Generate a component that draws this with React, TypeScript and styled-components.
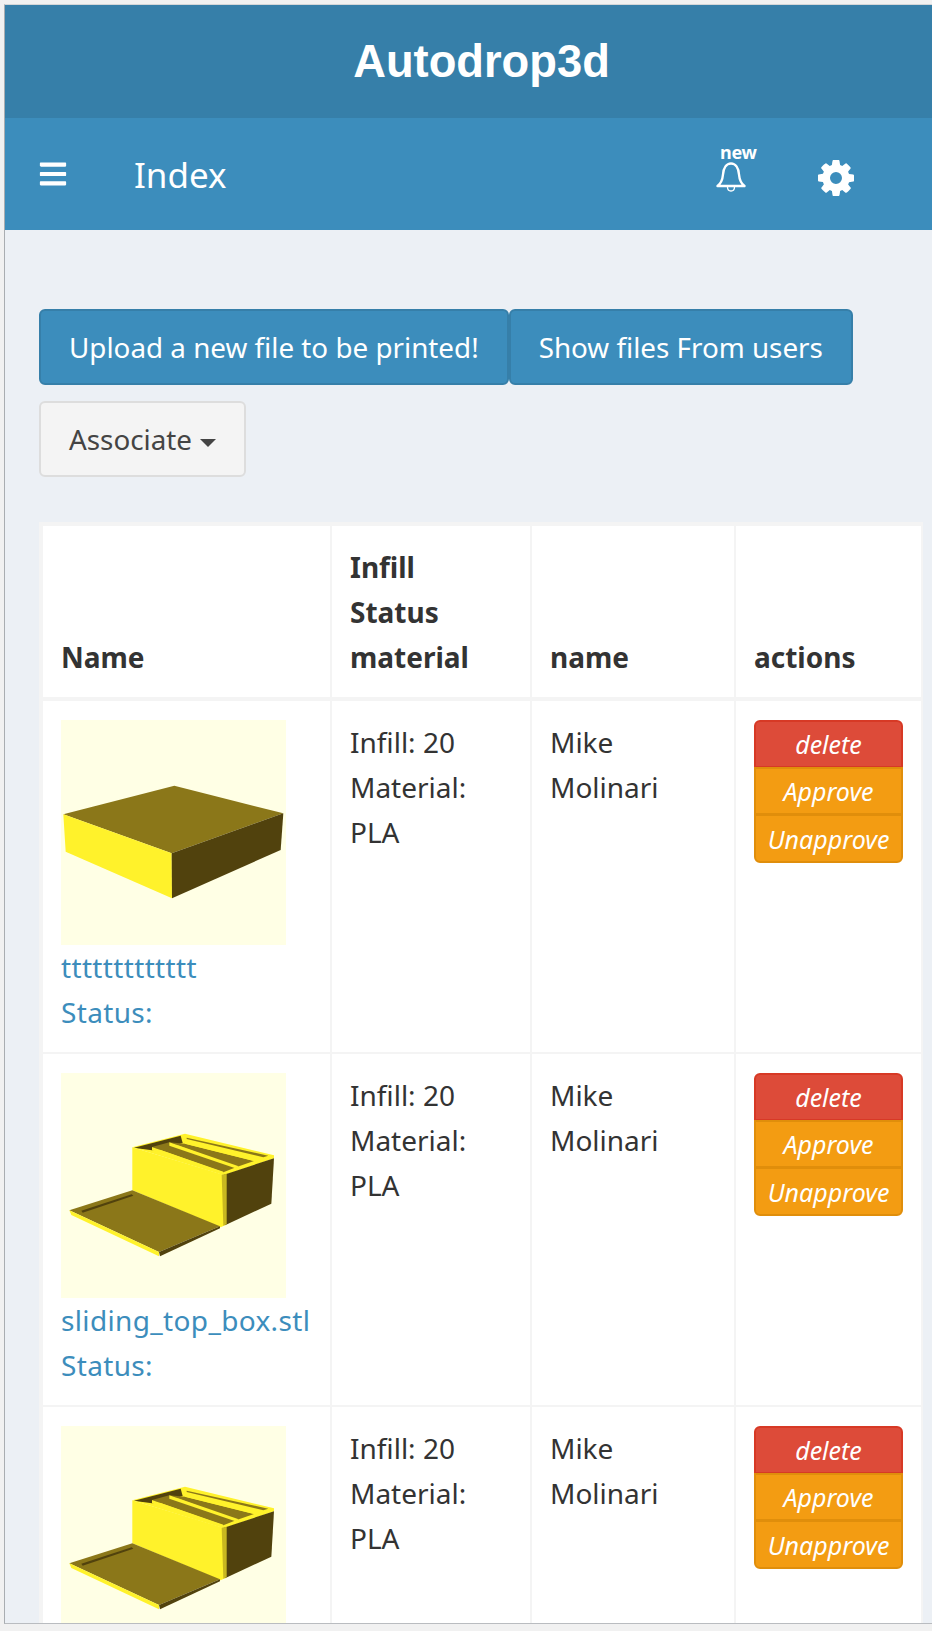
import React from "react";
import styled, { createGlobalStyle } from "styled-components";
import { FaBars } from "react-icons/fa";

const BODY_FONT = `"Noto Sans", "Open Sans", sans-serif`;

const GlobalStyle = createGlobalStyle`
  html, body {
    margin: 0;
    padding: 0;
    background: #f1f1f1;
  }
`;

const Frame = styled.div`
  box-sizing: border-box;
  width: 932px;
  height: 1620px;
  margin-top: 4px;
  padding-left: 4px;
  overflow: hidden;
`;

const Window = styled.div`
  box-sizing: border-box;
  height: 100%;
  background: #ecf0f5;
  border-left: 1px solid #a9adb1;
  border-top: 1px solid #d4d6d8;
  border-bottom: 1px solid #b9bcc0;
  font-family: ${BODY_FONT};
  font-size: 28px;
  line-height: 45px;
  color: #333;
  overflow: hidden;
`;

const Header = styled.header`
  height: 113px;
  background: #367fa9;
  color: #fff;
  display: flex;
  align-items: center;
  justify-content: center;
  padding-left: 26px;
  font-family: "Liberation Sans", Arial, sans-serif;
  font-weight: 700;
  font-size: 45.3px;
`;

const NavBar = styled.nav`
  height: 112px;
  background: #3c8dbc;
  color: #fff;
  display: flex;
  align-items: center;
  padding-left: 33px;
`;

const NavTitle = styled.span`
  margin-left: 66px;
  font-size: 35px;
  flex: 1;
`;

const BellWrap = styled.div`
  position: relative;
  width: 30px;
  height: 30px;
  margin-right: 72px;
`;

const BellBadge = styled.span`
  position: absolute;
  left: 4px;
  top: -17px;
  font-size: 18px;
  font-weight: 700;
  line-height: 20px;
  letter-spacing: -0.3px;
`;

const GearSlot = styled.div`
  display: flex;
  margin: 8px 78px 0 0;
`;

const Content = styled.main`
  padding: 79px 0 0 34px;
`;

const ButtonRow = styled.div`
  display: flex;
  flex-wrap: wrap;
  row-gap: 16px;
  width: 880px;
  margin-bottom: 45px;
`;

const Button = styled.button<{ $variant?: "primary" | "plain" }>`
  box-sizing: border-box;
  height: 76px;
  padding: 0 28px;
  border-radius: 6px;
  font-family: inherit;
  font-size: 27.8px;
  white-space: nowrap;
  border: 2px solid ${({ $variant }) => ($variant === "plain" ? "#ddd" : "#367fa9")};
  background: ${({ $variant }) => ($variant === "plain" ? "#f4f4f4" : "#3c8dbc")};
  color: ${({ $variant }) => ($variant === "plain" ? "#444" : "#fff")};
`;

const Caret = styled.span`
  display: inline-block;
  margin-left: 8px;
  vertical-align: middle;
  border-top: 8px solid #444;
  border-left: 8px solid transparent;
  border-right: 8px solid transparent;
`;

const Table = styled.table`
  width: 884px;
  table-layout: fixed;
  border-collapse: separate;
  border-spacing: 0;
  background: #fff;
  border-style: solid;
  border-color: #f4f4f4;
  border-width: 4px 2px 0 4px;
`;

const HeadCell = styled.th`
  padding: 19px 19px 17px 18px;
  vertical-align: bottom;
  text-align: left;
  font-weight: 700;
  border-right: 2px solid #f4f4f4;
  border-bottom: 4px solid #f4f4f4;
  &:last-child {
    border-right: 0;
  }
`;

const Cell = styled.td`
  padding: 19px 19px 17px 18px;
  vertical-align: top;
  border-right: 2px solid #f4f4f4;
  border-bottom: 2px solid #f4f4f4;
  &:last-child {
    border-right: 0;
    padding-right: 18px;
  }
`;

const Thumb = styled.svg`
  display: block;
  width: 225px;
  height: 225px;
`;

const FileLink = styled.a`
  display: block;
  color: #3c8dbc;
  white-space: nowrap;
  letter-spacing: 0.35px;
`;

const ActionGroup = styled.div`
  display: flex;
  flex-direction: column;
  width: 149px;
`;

const ActionButton = styled.button<{ $tone: "danger" | "warning" }>`
  box-sizing: border-box;
  height: 48px;
  padding: 0;
  font-family: inherit;
  font-size: 25px;
  font-style: italic;
  color: #fff;
  background: ${({ $tone }) => ($tone === "danger" ? "#dd4b39" : "#f39c12")};
  border: 2px solid ${({ $tone }) => ($tone === "danger" ? "#d73925" : "#e08e0b")};
  margin-top: -1px;
  &:first-child {
    margin-top: 0;
    border-radius: 6px 6px 0 0;
  }
  &:last-child {
    height: 49px;
    border-radius: 0 0 6px 6px;
  }
`;

const BellIcon = () => (
  <svg width="30" height="30" viewBox="0 0 30 30" fill="none" stroke="#fff" strokeWidth="2.4" strokeLinejoin="round">
    <path d="M1.5 24c3.5-2.500 5-6 5.500-11.500C7.500 6 10.500 1.500 15 1.500S22.500 6 23 12.500C23.500 18 25 21.500 28.500 24z" />
    <path d="M11.500 25c0 2.500 1.500 4 3.500 4s3.500-1.500 3.500-4" strokeWidth="1.300" />
  </svg>
);

const GearIcon = () => (
  <svg width="36" height="36" viewBox="128 128 1536 1536" fill="#fff" fillRule="evenodd">
    <path d="M1152 896q0-106-75-181t-181-75-181 75-75 181 75 181 181 75 181-75 75-181zm512-109v222q0 12-8 23t-20 13l-185 28q-19 54-39 91 35 50 107 138 10 12 10 25t-9 23q-27 37-99 108t-94 71q-12 0-26-9l-138-108q-44 23-91 38-16 136-29 186-7 28-36 28h-222q-14 0-24.500-8.500t-11.500-21.500l-28-184q-49-16-90-37l-141 107q-10 9-25 9-14 0-25-11-126-114-165-168-7-10-7-23 0-12 8-23 15-21 51-66.500t54-70.500q-27-50-41-99l-183-27q-13-2-21-12.500t-8-23.500v-222q0-12 8-23t19-13l186-28q14-46 39-92-40-57-107-138-10-12-10-24 0-10 9-23 26-36 98.500-107.500t94.500-71.500q13 0 26 10l138 107q44-23 91-38 16-136 29-186 7-28 36-28h222q14 0 24.500 8.500t11.500 21.500l28 184q49 16 90 37l142-107q9-9 24-9 13 0 25 10 129 119 165 170 7 8 7 22 0 12-8 23-15 21-51 66.500t-54 70.500q26 50 41 98l183 28q13 2 21 12.500t8 23.500z" />
  </svg>
);

const FlatBoxThumb = () => (
  <Thumb viewBox="63 60 675 675">
    <rect x="63" y="60" width="675" height="675" fill="#ffffe5" />
    <polygon points="70,343 403,257 730,340 395,460" fill="#8b7719" />
    <polygon points="70,343 395,460 396,595 77,455" fill="#fff22b" />
    <polygon points="395,460 730,340 722,450 396,595" fill="#51420d" />
  </Thumb>
);

const SlidingBoxThumb = () => (
  <Thumb viewBox="33 40 675 675">
    <rect x="33" y="40" width="675" height="675" fill="#ffffe5" />
    {/* tray, top and inner dividers */}
    <polygon points="247,263 405,222 672,287 672,296 522,347" fill="#fff22b" />
    <polygon points="252,264 392,228 398,250 330,270 306,272 262,266" fill="#51420d" />
    <polygon points="306,262 358,248 560,322 520,338" fill="#8b7719" />
    <polygon points="306,262 520,336 516,342 306,272" fill="#fff22b" />
    <polygon points="358,248 405,252 612,304 560,322" fill="#8b7719" />
    <polygon points="358,248 566,320 556,326 358,258" fill="#fff22b" />
    <polygon points="405,236 640,292 612,304 405,252" fill="#fff22b" />
    <polygon points="410,234 655,288 640,293 410,238" fill="#8b7719" />
    {/* front and side walls */}
    <polygon points="247,263 520,345 525,497 512,503 247,392" fill="#fff22b" />
    <polygon points="522,345 672,296 664,432 525,497" fill="#51420d" />
    <polygon points="515,345 530,342 530,494 520,498" fill="#c9b820" />
    {/* sliding lid */}
    <polygon points="58,452 247,392 510,500 327,577" fill="#8b7719" />
    <polygon points="58,452 327,577 327,590 64,466" fill="#fff22b" />
    <polygon points="327,577 510,500 510,506 330,590" fill="#51420d" />
    <polygon points="94,453 245,404 250,408 98,459" fill="#51420d" />
  </Thumb>
);

const rows = [
  { file: "ttttttttttttt", Preview: FlatBoxThumb },
  { file: "sliding_top_box.stl", Preview: SlidingBoxThumb },
  { file: "sliding_top_box.stl", Preview: SlidingBoxThumb },
];

export default function App() {
  return (
    <>
      <GlobalStyle />
      <Frame>
        <Window>
          <Header>Autodrop3d</Header>
          <NavBar>
            <FaBars size={30} />
            <NavTitle>Index</NavTitle>
            <BellWrap>
              <BellIcon />
              <BellBadge>new</BellBadge>
            </BellWrap>
            <GearSlot>
              <GearIcon />
            </GearSlot>
          </NavBar>
          <Content>
            <ButtonRow>
              <Button>Upload a new file to be printed!</Button>
              <Button>Show files From users</Button>
              <Button $variant="plain">
                Associate
                <Caret />
              </Button>
            </ButtonRow>
            <Table>
              <colgroup>
                <col style={{ width: 289 }} />
                <col style={{ width: 200 }} />
                <col style={{ width: 204 }} />
                <col />
              </colgroup>
              <thead>
                <tr>
                  <HeadCell>Name</HeadCell>
                  <HeadCell>
                    Infill
                    <br />
                    Status
                    <br />
                    material
                  </HeadCell>
                  <HeadCell>name</HeadCell>
                  <HeadCell>actions</HeadCell>
                </tr>
              </thead>
              <tbody>
                {rows.map(({ file, Preview }, i) => (
                  <tr key={i}>
                    <Cell>
                      <Preview />
                      <FileLink>{file}</FileLink>
                      <FileLink>Status:</FileLink>
                    </Cell>
                    <Cell>
                      Infill: 20
                      <br />
                      Material: PLA
                    </Cell>
                    <Cell>Mike Molinari</Cell>
                    <Cell>
                      <ActionGroup>
                        <ActionButton $tone="danger">delete</ActionButton>
                        <ActionButton $tone="warning">Approve</ActionButton>
                        <ActionButton $tone="warning">Unapprove</ActionButton>
                      </ActionGroup>
                    </Cell>
                  </tr>
                ))}
              </tbody>
            </Table>
          </Content>
        </Window>
      </Frame>
    </>
  );
}
